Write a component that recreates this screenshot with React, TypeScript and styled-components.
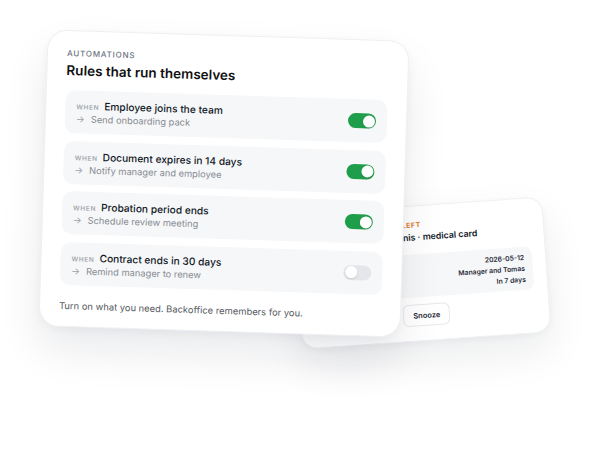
import React from "react";
import styled, { createGlobalStyle } from "styled-components";

const Global = createGlobalStyle`
  html, body { margin: 0; padding: 0; background: #ffffff; }
  body { font-family: Inter, "Noto Sans", "Liberation Sans", sans-serif; -webkit-font-smoothing: antialiased; }
`;

const Stage = styled.div`
  position: relative;
  width: 600px;
  height: 450px;
  overflow: hidden;
  background: #ffffff;
`;

/* ---------- back card ---------- */
const BackCard = styled.div`
  position: absolute;
  left: 297px;
  top: 205px;
  width: 250px;
  box-sizing: border-box;
  padding: 13px 13px 14px 14px;
  background: #ffffff;
  border: 1px solid #f0f1f3;
  border-radius: 16px;
  transform: rotate(-4deg);
  box-shadow: 0 18px 40px rgba(15, 23, 42, 0.08), 0 2px 6px rgba(15, 23, 42, 0.04);
  display: flex;
  flex-direction: column;
  gap: 7px;
`;

const BackHeader = styled.div`
  display: flex;
  align-items: center;
  gap: 15px;
  margin-bottom: 4px;
`;

const DocIcon = styled.div`
  width: 24px;
  height: 24px;
  border-radius: 7px;
  background: #fff3e8;
  flex: none;
`;

const HeadText = styled.div`
  display: flex;
  flex-direction: column;
  gap: 1px;
`;

const Alert = styled.div`
  font-size: 7px;
  line-height: 10px;
  font-weight: 700;
  letter-spacing: 0.08em;
  color: #e07b2c;
  text-transform: uppercase;
`;

const BackTitle = styled.div`
  display: flex;
  align-items: center;
  gap: 3px;
  font-size: 8.8px;
  line-height: 11px;
  font-weight: 600;
  color: #111827;
`;

const StatusDot = styled.span`
  width: 4px;
  height: 4px;
  border-radius: 50%;
  background: #e07b2c;
  flex: none;
`;

const InfoBox = styled.div`
  background: #f6f7f8;
  border-radius: 8px;
  padding: 5px 8px;
  display: flex;
  flex-direction: column;
`;

const InfoRow = styled.div`
  display: flex;
  justify-content: space-between;
  font-size: 6.8px;
  line-height: 11px;
`;

const InfoLabel = styled.span`
  color: #9aa0a8;
`;

const InfoValue = styled.span`
  font-weight: 600;
  color: #1f2937;
`;

const Actions = styled.div`
  display: flex;
  gap: 8px;
`;

const Btn = styled.div<{ $primary?: boolean }>`
  height: 22px;
  box-sizing: border-box;
  padding: 0 9px;
  display: flex;
  align-items: center;
  border-radius: 6px;
  font-size: 7.5px;
  font-weight: 600;
  background: ${(p) => (p.$primary ? "#111111" : "#ffffff")};
  color: ${(p) => (p.$primary ? "#ffffff" : "#1f2937")};
  border: 1px solid ${(p) => (p.$primary ? "#111111" : "#e6e8eb")};
`;

/* ---------- main card ---------- */
const MainCard = styled.div`
  position: absolute;
  left: 43px;
  top: 35px;
  width: 362px;
  box-sizing: border-box;
  padding: 17px 19px 14px 19px;
  background: #ffffff;
  border: 1px solid #eff0f2;
  border-radius: 20px;
  transform: rotate(1.8deg);
  box-shadow: 0 22px 44px rgba(15, 23, 42, 0.09), 0 3px 8px rgba(15, 23, 42, 0.04);
  display: flex;
  flex-direction: column;
`;

const Eyebrow = styled.div`
  font-size: 8px;
  line-height: 10px;
  font-weight: 500;
  letter-spacing: 0.1em;
  color: #6b7280;
  text-transform: uppercase;
`;

const Heading = styled.div`
  margin-top: 3px;
  font-size: 13.5px;
  line-height: 18px;
  font-weight: 600;
  color: #111111;
`;

const RuleList = styled.div`
  margin-top: 11px;
  display: flex;
  flex-direction: column;
  gap: 7.5px;
`;

const Rule = styled.div`
  height: 43px;
  box-sizing: border-box;
  background: #f6f7f8;
  border-radius: 10px;
  padding: 0 11px;
  display: flex;
  align-items: center;
  justify-content: space-between;
`;

const RuleText = styled.div`
  display: flex;
  flex-direction: column;
`;

const Trigger = styled.div`
  display: flex;
  align-items: baseline;
  gap: 5px;
  height: 14px;
  font-size: 10.2px;
  line-height: 14px;
  font-weight: 500;
  color: #111827;
`;

const When = styled.span`
  font-size: 6.5px;
  line-height: 14px;
  font-weight: 600;
  letter-spacing: 0.1em;
  color: #a3a8af;
`;

const Effect = styled.div`
  height: 13px;
  font-size: 9.3px;
  line-height: 13px;
  color: #868b93;
  display: flex;
  gap: 6px;
`;

const Arrow = styled.span`
  color: #9ca1a8;
`;

const Toggle = styled.div<{ $on: boolean }>`
  width: 28px;
  height: 15px;
  border-radius: 8px;
  background: ${(p) => (p.$on ? "#1e9e4a" : "#e4e6e9")};
  position: relative;
  flex: none;
  &::after {
    content: "";
    position: absolute;
    top: 1.5px;
    left: ${(p) => (p.$on ? "14.5px" : "1.5px")};
    width: 12px;
    height: 12px;
    border-radius: 50%;
    background: #ffffff;
    box-shadow: 0 1px 2px rgba(0, 0, 0, 0.12);
  }
`;

const Footer = styled.div`
  margin-top: 14px;
  font-size: 9.4px;
  line-height: 13px;
  color: #555a61;
`;

const rules = [
  { when: "Employee joins the team", then: "Send onboarding pack", on: true },
  { when: "Document expires in 14 days", then: "Notify manager and employee", on: true },
  { when: "Probation period ends", then: "Schedule review meeting", on: true },
  { when: "Contract ends in 30 days", then: "Remind manager to renew", on: false },
];

export default function App() {
  return (
    <Stage>
      <Global />
      <BackCard>
        <BackHeader>
          <DocIcon />
          <HeadText>
            <Alert>Due · 7 days left</Alert>
            <BackTitle>
              <StatusDot />
              Tomas Dennis · medical card
            </BackTitle>
          </HeadText>
        </BackHeader>
        <InfoBox>
          <InfoRow>
            <InfoLabel>Expires</InfoLabel>
            <InfoValue>2026-05-12</InfoValue>
          </InfoRow>
          <InfoRow>
            <InfoLabel>Notify</InfoLabel>
            <InfoValue>Manager and Tomas</InfoValue>
          </InfoRow>
          <InfoRow>
            <InfoLabel>Reminder</InfoLabel>
            <InfoValue>In 7 days</InfoValue>
          </InfoRow>
        </InfoBox>
        <Actions>
          <Btn $primary>Request renewal</Btn>
          <Btn>Snooze</Btn>
        </Actions>
      </BackCard>

      <MainCard>
        <Eyebrow>Automations</Eyebrow>
        <Heading>Rules that run themselves</Heading>
        <RuleList>
          {rules.map((r) => (
            <Rule key={r.when}>
              <RuleText>
                <Trigger>
                  <When>WHEN</When>
                  {r.when}
                </Trigger>
                <Effect>
                  <Arrow>→</Arrow>
                  {r.then}
                </Effect>
              </RuleText>
              <Toggle $on={r.on} />
            </Rule>
          ))}
        </RuleList>
        <Footer>Turn on what you need. Backoffice remembers for you.</Footer>
      </MainCard>
    </Stage>
  );
}
